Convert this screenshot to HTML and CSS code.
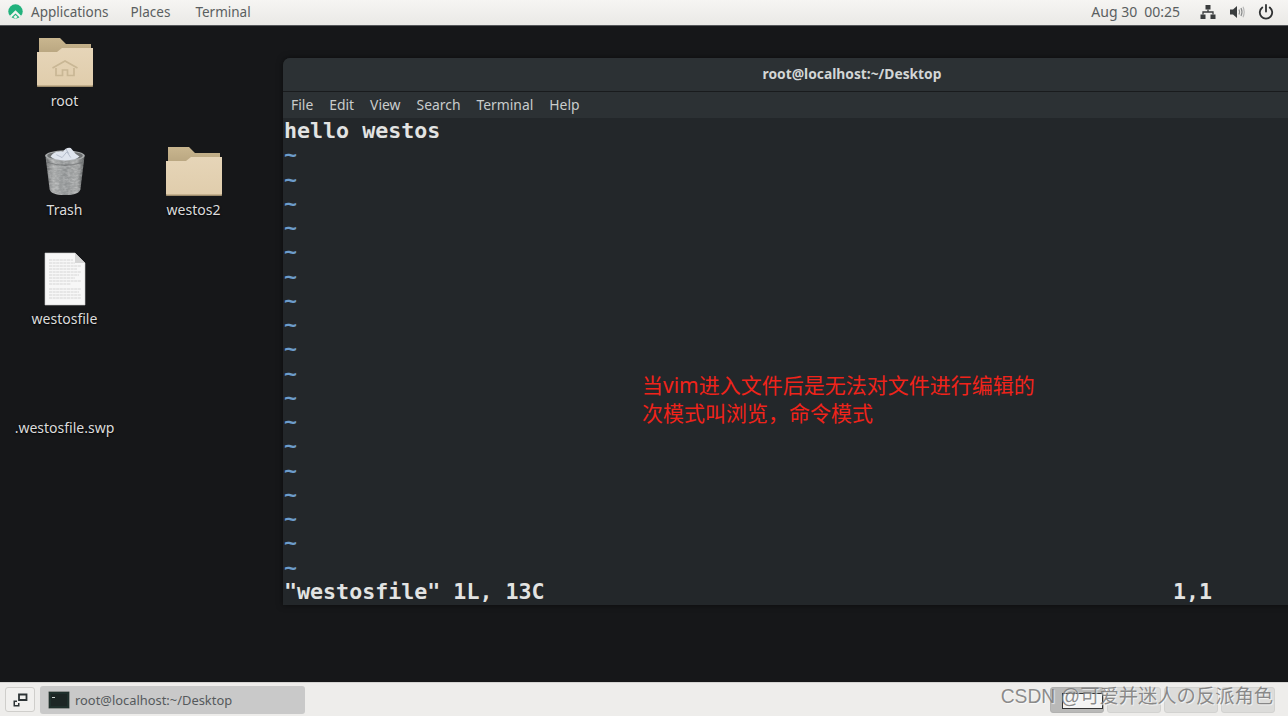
FILE: index.html
```html
<!DOCTYPE html>
<html lang="en">
<head>
<meta charset="utf-8">
<title>Desktop</title>
<link rel="stylesheet" href="styles.css">
</head>
<body>
<svg class="defs" width="0" height="0" aria-hidden="true">
  <defs>
    <linearGradient id="folderBack" x1="0" y1="0" x2="0" y2="1"><stop offset="0" stop-color="#c9b68f"/><stop offset="1" stop-color="#ae9b76"/></linearGradient>
    <linearGradient id="folderFront" x1="0" y1="0" x2="0" y2="1"><stop offset="0" stop-color="#e6d5b8"/><stop offset="1" stop-color="#e0cdac"/></linearGradient>
    <linearGradient id="metal" x1="0" y1="0" x2="1" y2="0"><stop offset="0" stop-color="#5f6263"/><stop offset=".2" stop-color="#a9abab"/><stop offset=".5" stop-color="#8e9192"/><stop offset=".8" stop-color="#a4a6a6"/><stop offset="1" stop-color="#535657"/></linearGradient>
    <filter id="grain" x="0" y="0" width="100%" height="100%"><feTurbulence type="fractalNoise" baseFrequency=".25 .45" numOctaves="2" seed="4"/><feColorMatrix values="0 0 0 0 1  0 0 0 0 1  0 0 0 0 1  0 0 0 1.200 -.45"/><feComposite in2="SourceGraphic" operator="in"/></filter>
  </defs>
</svg>
<header class="topbar">
  <nav class="topbar-menu">
    <svg class="logo" viewBox="0 0 16 16"><circle cx="8" cy="8" r="7.700" fill="#22b27d"/><path d="M1.800 12.800 8 6.600l6.200 6.200-1.700 1.500L8 10.200l-4.500 4.100z" fill="#f3f3f0"/><path d="M5.800 13.800 8 11.800l2.200 2-2.200 2z" fill="#f3f3f0"/></svg>
    <span class="menu-apps">Applications</span>
    <span class="menu-places">Places</span>
    <span>Terminal</span>
  </nav>
  <div class="tray">
    <span class="clock"><span>Aug 30</span><span>00:25</span></span>
    <svg class="tray-icon net" viewBox="0 0 16 16"><path d="M5.500 1h5v4.500h-5zM0.500 10.500h5V15h-5zM10.500 10.500h5V15h-5z" fill="#3a3d3e"/><path d="M8 5.500v2.500M3 10.500V8h10v2.500" fill="none" stroke="#3a3d3e" stroke-width="1.300"/></svg>
    <svg class="tray-icon vol" viewBox="0 0 16 16"><path d="M1 5.500h3L8 2v12L4 10.500H1z" fill="#3a3d3e"/><path d="M10 5.500q1.300 2.500 0 5M12 4q2 4 0 8" fill="none" stroke="#8b8d8d" stroke-width="1.200"/><path d="M14 2.800q2.400 5.200 0 10.400" fill="none" stroke="#b5b6b6" stroke-width="1.100"/></svg>
    <svg class="tray-icon" viewBox="0 0 16 16"><path d="M4.300 3.500a6.200 6.200 0 1 0 7.400 0" fill="none" stroke="#2f3132" stroke-width="1.800" stroke-linecap="round"/><path d="M8 1v6.500" stroke="#2f3132" stroke-width="1.800" stroke-linecap="round"/></svg>
  </div>
</header>

<main class="desktop">
  <div class="icon-grid">
    <div class="desk-item slot-root">
      <svg class="desk-icon folder" viewBox="0 0 58 52"><path d="M3 2h21l6 6h25v20H3z" fill="url(#folderBack)"/><path d="M1 16h20l5-4h31v37a1.500 1.500 0 0 1-1.500 1.500h-53A1.500 1.500 0 0 1 1 49z" fill="url(#folderFront)"/><path d="M1 49.500h56v1.200H1z" fill="#a8946f"/><path d="M16.500 32 29 25l12.500 7M20 32v7.500h6.500V34h5v5.500H38V32" fill="none" stroke="#c9b795" stroke-width="1.700"/></svg>
      <span class="desk-label">root</span>
    </div>
    <div class="desk-item slot-trash">
      <svg class="desk-icon trash" viewBox="0 0 44 52"><path d="M1.500 8 6 44q1 6 16 6t16-6l4.500-36z" fill="url(#metal)"/><path d="M1.500 8 6 44q1 6 16 6t16-6l4.500-36z" fill="#fff" filter="url(#grain)" opacity=".55"/><ellipse cx="22" cy="9" rx="20.500" ry="5.500" fill="#a9acad"/><ellipse cx="22" cy="9" rx="18.500" ry="4.200" fill="#6c6f70"/><path d="M7 10q3-5 8-5 3-1 5 0 3-5 8-4l5 6 4 3q-4 4-15 4t-15-4z" fill="#dfe5ee"/><path d="M13 8l6 3 5-6 4 6M23 2l3 5" fill="none" stroke="#a9b2c1" stroke-width=".8"/><path d="M3.800 16q18 6 36.400 0" fill="none" stroke="#55585a" stroke-width="1" opacity=".5"/></svg>
      <span class="desk-label">Trash</span>
    </div>
    <div class="desk-item slot-westos2">
      <svg class="desk-icon folder" viewBox="0 0 58 52"><path d="M3 2h21l6 6h25v20H3z" fill="url(#folderBack)"/><path d="M1 16h20l5-4h31v37a1.500 1.500 0 0 1-1.500 1.500h-53A1.500 1.500 0 0 1 1 49z" fill="url(#folderFront)"/><path d="M1 49.500h56v1.200H1z" fill="#a8946f"/></svg>
      <span class="desk-label">westos2</span>
    </div>
    <div class="desk-item slot-file">
      <svg class="desk-icon file" viewBox="0 0 42 54"><path d="M1 1h30l10 10v42H1z" fill="#f7f7f7" stroke="#c9c9c9" stroke-width=".6"/><path d="M31 1v10h10z" fill="#d5d5d5"/><path d="M5 8h24M5 11h26M5 14h32M5 17h28M5 20h32M5 23h30M5 26h26M5 29h32M5 32h22M5 37h32M5 40h30M5 43h32M5 46h32" stroke="#c6c6c6" stroke-width=".7" stroke-dasharray="3 .6"/></svg>
      <span class="desk-label">westosfile</span>
    </div>
    <div class="desk-item slot-swp">
      <span class="desk-label">.westosfile.swp</span>
    </div>
  </div>

  <section class="window">
    <div class="titlebar">root@localhost:~/Desktop</div>
    <div class="menubar">
      <span>File</span><span>Edit</span><span>View</span><span>Search</span><span>Terminal</span><span>Help</span>
    </div>
    <div class="terminal">
      <div class="line">hello westos</div>
      <div class="line tilde">~</div><div class="line tilde">~</div><div class="line tilde">~</div>
      <div class="line tilde">~</div><div class="line tilde">~</div><div class="line tilde">~</div>
      <div class="line tilde">~</div><div class="line tilde">~</div><div class="line tilde">~</div>
      <div class="line tilde">~</div><div class="line tilde">~</div><div class="line tilde">~</div>
      <div class="line tilde">~</div><div class="line tilde">~</div><div class="line tilde">~</div>
      <div class="line tilde">~</div><div class="line tilde">~</div><div class="line tilde">~</div>
      <div class="line status"><span class="status-file">"westosfile" 1L, 13C</span><span>1,1</span></div>
    </div>
    <p class="annotation">当vim进入文件后是无法对文件进行编辑的<br>次模式叫浏览，命令模式</p>
  </section>
</main>

<footer class="taskbar">
  <button class="show-desktop" type="button" aria-label="Show desktop">
    <svg viewBox="0 0 16 16" width="16" height="16"><path d="M7 2.500h7.500V8H7z" fill="none" stroke="#2e3436" stroke-width="1.800"/><path d="M1.500 8.500H5V10H3v3h3v-2h1.500v3.500h-6z" fill="#2e3436"/></svg>
  </button>
  <div class="task">
    <svg class="task-icon" viewBox="0 0 22 18"><rect x=".5" y=".5" width="21" height="17" rx="1" fill="#20302c" stroke="#8f928f"/><path d="M3 3v12h16V3z" fill="#1d2624"/><path d="M4 6h3v1H4z" fill="#cfd6d2"/></svg>
    <span>root@localhost:~/Desktop</span>
  </div>
  <div class="workspaces">
    <div class="ws ws-active"><span class="ws-window"></span></div>
    <div class="ws"></div>
    <div class="ws"></div>
    <div class="ws"></div>
  </div>
  <div class="watermark">CSDN @可爱并迷人の反派角色</div>
</footer>
</body>
</html>
```

FILE: styles.css
```css
* { box-sizing: border-box; }

html, body { height: 100%; }

body {
  margin: 0;
  width: 1288px;
  height: 716px;
  overflow: hidden;
  display: flex;
  flex-direction: column;
  background: #161719;
  font-family: "Noto Sans", "Open Sans", sans-serif;
  font-size: 13.5px;
}

.defs { position: absolute; }

.topbar {
  height: 26px;
  flex: none;
  display: flex;
  align-items: center;
  justify-content: space-between;
  padding: 0 14px 2px 8px;
  background: linear-gradient(#f6f5f3, #eae9e6);
  border-bottom: 1px solid #55575a;
  color: #5a5e60;
}

.topbar-menu { display: flex; align-items: center; }
.logo { width: 15px; height: 15px; margin-right: 8px; }
.menu-apps { margin-right: 22px; }
.menu-places { margin-right: 25px; }

.tray { display: flex; align-items: center; }
.clock { display: flex; gap: 7px; margin-right: 20px; font-size: 14px; }
.tray-icon { width: 16px; height: 16px; }
.tray-icon.net { margin-right: 13px; }
.tray-icon.vol { margin-right: 13px; }

.desktop {
  flex: 1;
  position: relative;
  overflow: hidden;
  background: #161719;
}

.icon-grid {
  display: grid;
  grid-template-columns: 129px 129px;
  grid-template-rows: 85px 109px 109px 109px;
  width: 258px;
}

.desk-item {
  display: flex;
  flex-direction: column;
  align-items: center;
  justify-content: flex-end;
}

.slot-root { grid-area: 1 / 1; }
.slot-trash { grid-area: 2 / 1; }
.slot-westos2 { grid-area: 2 / 2; }
.slot-file { grid-area: 3 / 1; }
.slot-swp { grid-area: 4 / 1; }

.desk-icon { display: block; margin-bottom: 3px; }
.folder { width: 58px; height: 52px; }
.trash { width: 44px; height: 50px; }
.file { width: 42px; height: 54px; }

.desk-label {
  color: #dcdcdc;
  font-size: 14px;
  line-height: 20px;
  white-space: nowrap;
  text-shadow: 0 1px 2px #000;
}

.window {
  position: absolute;
  left: 283px;
  top: 32px;
  width: 1138px;
  height: 547px;
  border-radius: 7px 7px 0 0;
  background: #23272a;
  color: #d9dbdb;
  box-shadow: 0 0 6px rgba(0, 0, 0, .5);
  overflow: hidden;
}

.titlebar {
  height: 34px;
  display: flex;
  align-items: center;
  justify-content: center;
  padding-bottom: 2px;
  background: #2c3134;
  border-bottom: 1px solid #191b1d;
  font-weight: 700;
  font-size: 13.800px;
  color: #d3d6d6;
}

.menubar {
  height: 26px;
  display: flex;
  align-items: center;
  gap: 16px;
  padding: 0 0 1px 8px;
  background: #2c3134;
  color: #c9cccc;
  font-size: 13.900px;
}

.terminal {
  padding: 1px 0 0 1px;
  font-family: "DejaVu Sans Mono", monospace;
  font-size: 21.650px;
  font-weight: 700;
  line-height: 24.25px;
  color: #e2e3e2;
}

.line { height: 24.25px; white-space: pre; }
.tilde { color: #6d9ccb; }
.status { display: flex; }
.status-file { width: 889px; }

.annotation {
  position: absolute;
  left: 359px;
  top: 313px;
  margin: 0;
  font-family: "Noto Sans", "Noto Sans CJK SC", sans-serif;
  font-size: 21px;
  line-height: 28px;
  color: #f0231a;
  white-space: nowrap;
}

.taskbar {
  position: relative;
  height: 34px;
  flex: none;
  display: flex;
  align-items: center;
  padding: 0 13px 0 5px;
  background: #eeedeb;
  border-top: 1px solid #d5d4d2;
  color: #55595c;
}

.show-desktop {
  width: 30px;
  height: 25px;
  margin: 0 5px 0 0;
  padding: 0;
  display: flex;
  align-items: center;
  justify-content: center;
  background: #f1f0ee;
  border: 1px solid #cfcecb;
  border-radius: 3px;
}

.task {
  width: 265px;
  height: 28px;
  display: flex;
  align-items: center;
  gap: 5px;
  padding-left: 8px;
  background: #c9c9c9;
  border-radius: 3px;
  font-size: 12.900px;
}

.task-icon { width: 22px; height: 18px; }

.workspaces {
  margin-left: auto;
  display: flex;
  gap: 3px;
}

.ws {
  width: 54px;
  height: 26px;
  background: #dcdcda;
  border: 1px solid #d2d2d0;
  border-radius: 3px;
}

.ws-active {
  padding: 5px 0 0 11px;
  background: #b9b9b8;
  border-color: #b1b1b0;
}

.ws-window {
  display: block;
  width: 41px;
  height: 16px;
  background: #f4f4f4;
  border: 1px solid #333;
}

.watermark {
  position: absolute;
  right: 15px;
  top: 1px;
  font-family: "Liberation Sans", "Noto Sans CJK SC", sans-serif;
  font-size: 19.300px;
  line-height: 26px;
  white-space: nowrap;
  color: rgba(120, 120, 120, .85);
  text-shadow: 1px 1px 1px rgba(255, 255, 255, .7);
}
```
